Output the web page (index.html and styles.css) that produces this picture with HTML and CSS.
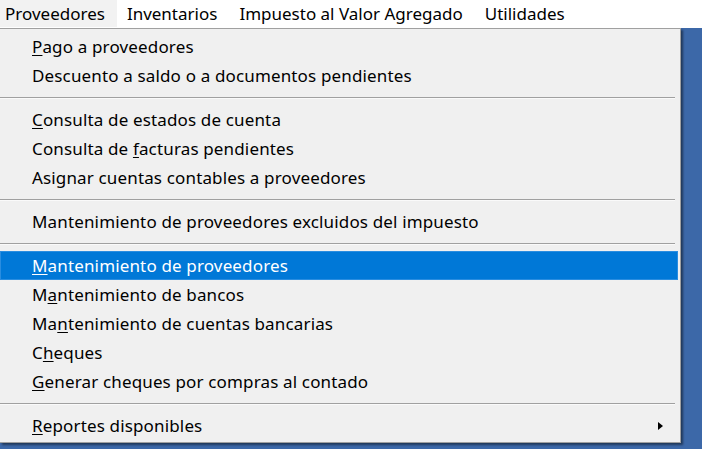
FILE: index.html
```html
<!DOCTYPE html>
<html lang="es">
<head>
<meta charset="utf-8">
<title>Proveedores</title>
<link rel="stylesheet" href="styles.css">
</head>
<body>
<nav class="menubar">
  <div class="top-item active">Proveedores</div>
  <div class="top-item">Inventarios</div>
  <div class="top-item">Impuesto al Valor Agregado</div>
  <div class="top-item">Utilidades</div>
</nav>
<div class="popup">
  <div class="row"><u>P</u>ago a proveedores</div>
  <div class="row">Descuento a saldo o a documentos pendientes</div>
  <div class="sep"></div>
  <div class="row"><u>C</u>onsulta de estados de cuenta</div>
  <div class="row">Consulta de <u>f</u>acturas pendientes</div>
  <div class="row">Asignar cuentas contables a proveedores</div>
  <div class="sep"></div>
  <div class="row">Mantenimiento de proveedores excluidos del impuesto</div>
  <div class="sep"></div>
  <div class="row selected"><u>M</u>antenimiento de proveedores</div>
  <div class="row">M<u>a</u>ntenimiento de bancos</div>
  <div class="row">Ma<u>n</u>tenimiento de cuentas bancarias</div>
  <div class="row">C<u>h</u>eques</div>
  <div class="row"><u>G</u>enerar cheques por compras al contado</div>
  <div class="sep"></div>
  <div class="row has-sub"><span><u>R</u>eportes disponibles</span><span class="arrow"></span></div>
</div>
</body>
</html>
```
FILE: styles.css
```css
html, body {
  margin: 0;
  padding: 0;
}
body {
  background: #3c68a8;
  font-family: "Noto Sans", "Open Sans", sans-serif;
  font-size: 17px;
  color: #000;
  width: 702px;
  height: 449px;
  overflow: hidden;
}
.menubar {
  display: flex;
  height: 28px;
  background: #ffffff;
}
.top-item {
  padding: 0 12px 0 5px;
  margin-right: 5px;
  line-height: 27px;
  height: 27px;
}
.top-item.active {
  background: #f2f2f2;
}
.popup {
  width: 678px;
  background: #f0f0f0;
  border: 1px solid #a0a0a0;
  border-left: none;
  padding: 3px 2px 2px 0;
  box-shadow: 2px 2px 2px rgba(0, 0, 0, 0.45);
}
.row {
  height: 29px;
  line-height: 29px;
  padding-left: 32px;
  white-space: nowrap;
  letter-spacing: 0.15px;
}
.row u {
  text-decoration: underline;
  text-underline-offset: 2px;
}
.row.selected {
  background: #0078d7;
  color: #fff;
  box-shadow: inset 0 0 0 1px #2a8de0;
}
.sep {
  height: 15px;
  display: flex;
  align-items: center;
  padding-right: 3px;
}
.sep::before {
  content: "";
  display: block;
  width: 100%;
  height: 2px;
  background: linear-gradient(#a0a0a0 50%, #fafafa 50%);
}
.has-sub {
  display: flex;
  justify-content: space-between;
  align-items: center;
  padding-right: 15px;
}
.arrow {
  width: 0;
  height: 0;
  border-top: 4.5px solid transparent;
  border-bottom: 4.5px solid transparent;
  border-left: 5px solid #000;
}
```
